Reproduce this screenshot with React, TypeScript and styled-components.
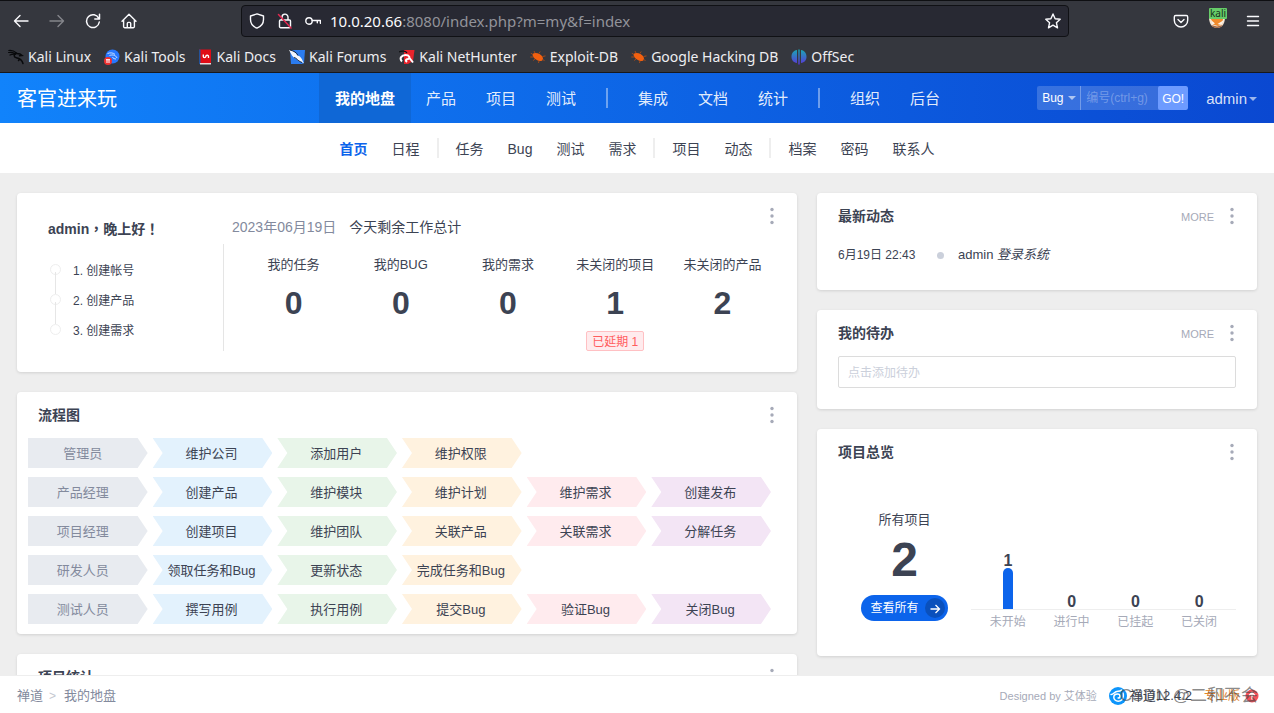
import React from "react";
import styled, { createGlobalStyle, css } from "styled-components";

const GlobalStyle = createGlobalStyle`
  *, *::before, *::after { box-sizing: border-box; }
  body {
    margin: 0;
    background: #eee;
    color: #3c4353;
    font-family: "Liberation Sans", "Noto Sans CJK SC", sans-serif;
    font-size: 13px;
    line-height: 20px;
  }
  a { color: inherit; text-decoration: none; }
  button, input, select { font: inherit; color: inherit; }
  h1, h2, p, ul, ol, dl, dd { margin: 0; padding: 0; }
  ul, ol { list-style: none; }
`;

const Shell = styled.div`
  display: flex;
  flex-direction: column;
  height: 100vh;
`;

/* ---------- Browser chrome ---------- */

const Chrome = styled.div`
  flex: none;
  background: #35373e;
  border-top: 1px solid #0e0f12;
  border-bottom: 1px solid #17181c;
  color: #fbfbfe;
  font-family: "Noto Sans", sans-serif;
`;

const Toolbar = styled.div`
  display: flex;
  align-items: center;
  height: 40px;
  padding: 0 3px;
`;

const ToolButton = styled.button<{ $dim?: boolean }>`
  display: flex;
  align-items: center;
  justify-content: center;
  flex: none;
  width: 36px;
  height: 32px;
  padding: 0;
  border: 0;
  background: none;
  opacity: ${(p) => (p.$dim ? 0.4 : 1)};
`;

const AddressBar = styled.div`
  display: flex;
  align-items: center;
  flex: 1;
  height: 32px;
  margin: 0 94px;
  padding: 0 7px;
  border: 1px solid #101115;
  border-radius: 4px;
  background: #282933;
`;

const AddressIcons = styled.div`
  display: flex;
  align-items: center;
  gap: 12px;
  margin-right: 9px;
`;

const Address = styled.div`
  flex: 1;
  color: #92939a;
  font-size: 15px;
  line-height: 24px;
  white-space: nowrap;
  outline: 0;
`;

const Host = styled.span`
  color: #fbfbfe;
`;

const Bookmarks = styled.nav`
  display: flex;
  align-items: center;
  gap: 13px;
  height: 31px;
  padding: 0 8px;
`;

const Bookmark = styled.a`
  display: flex;
  align-items: center;
  gap: 4px;
  color: #eeeef1;
  font-size: 14px;
  line-height: 20px;
  white-space: nowrap;
  svg { flex: none; }
`;

const stroke = {
  fill: "none",
  stroke: "currentColor",
  strokeWidth: 1.4,
  strokeLinecap: "round" as const,
  strokeLinejoin: "round" as const,
};

const BackIcon = () => (
  <svg width="16" height="16" viewBox="0 0 16 16" {...stroke}>
    <path d="M15 8H1.500M7 2.500 1.500 8 7 13.500" />
  </svg>
);
const ForwardIcon = () => (
  <svg width="16" height="16" viewBox="0 0 16 16" {...stroke}>
    <path d="M1 8h13.500M9 2.500 14.500 8 9 13.500" />
  </svg>
);
const ReloadIcon = () => (
  <svg width="16" height="16" viewBox="0 0 16 16" {...stroke} strokeWidth={1.5}>
    <path d="M13.800 5.500A6.400 6.400 0 1 0 14.300 9M14.500 1.200v4.700H9.800" />
  </svg>
);
const HomeIcon = () => (
  <svg width="16" height="16" viewBox="0 0 16 16" {...stroke}>
    <path d="M1 8.300 8 1.300l7 7M2.600 7v6.500a1.200 1.200 0 0 0 1.200 1.200h8.400a1.200 1.200 0 0 0 1.200-1.200V7M6.300 14.500V10.400a1 1 0 0 1 1-1h1.400a1 1 0 0 1 1 1v4.100" />
  </svg>
);
const ShieldIcon = () => (
  <svg width="16" height="16" viewBox="0 0 16 16" {...stroke}>
    <path d="M8 .9 14.500 3v3.500c0 4-2.300 7-6.500 8.600C3.800 13.500 1.500 10.500 1.500 6.500V3z" />
  </svg>
);
const InsecureIcon = () => (
  <svg width="16" height="16" viewBox="0 0 16 16" {...stroke}>
    <path d="M5 7V4.200a3 3 0 0 1 6-.2V7M3.500 7h9a1 1 0 0 1 1 1v5.500a1.200 1.200 0 0 1-1.200 1.200H3.700a1.200 1.200 0 0 1-1.200-1.200V8a1 1 0 0 1 1-1z" />
    <path d="M1.500 1.500 14 15" stroke="#e22850" strokeWidth="1.500" />
  </svg>
);
const KeyIcon = () => (
  <svg width="16" height="16" viewBox="0 0 16 16" {...stroke}>
    <circle cx="4" cy="8" r="3.200" />
    <path d="M7.200 7.500h8.200v2.800M12.300 7.500v2.200" />
  </svg>
);
const StarIcon = () => (
  <svg width="16" height="16" viewBox="0 0 16 16" {...stroke}>
    <path d="m8 1 2.100 4.700 5.100.5-3.800 3.500 1.100 5.100L8 12.200l-4.500 2.600 1.100-5.100L.8 6.200l5.100-.5z" />
  </svg>
);
const PocketIcon = () => (
  <svg width="16" height="16" viewBox="0 0 16 16" {...stroke}>
    <path d="M2.700 2.500h10.600a1.400 1.400 0 0 1 1.400 1.400v3.400a6.700 6.700 0 0 1-13.400 0V3.900a1.400 1.400 0 0 1 1.400-1.400zM5 6.500l3 3 3-3" />
  </svg>
);
const MenuIcon = () => (
  <svg width="16" height="16" viewBox="0 0 16 16" {...stroke}>
    <path d="M2.500 3.500h11M2.500 8h11M2.500 12.500h11" />
  </svg>
);

const ProxyWrap = styled.span`
  position: relative;
  display: flex;
`;
const ProxyBadge = styled.span`
  position: absolute;
  left: 1px;
  top: -4px;
  padding: 0 1px;
  border-radius: 1px;
  background: #67cd69;
  color: #16331a;
  font-size: 10px;
  line-height: 11px;
`;
const FoxIcon = () => (
  <svg width="18" height="18" viewBox="0 0 18 18">
    <path d="M1 6h16c-.3 6.500-3.500 10-8 10S1.300 12.500 1 6z" fill="#f2e3d3" />
    <path d="M3 7h12l-1 5.500-4 1.500-5-1.500z" fill="#f08a2c" />
    <path d="m3 8 4 3.500-2.500 1zM16 8l-2.500 5-4-1z" fill="#fbf3e8" />
    <path d="M3 13c3 4 9 4 12 0l-6 1.500z" fill="#a9683f" />
  </svg>
);

const DragonIcon = () => (
  <svg width="16" height="16" viewBox="0 0 16 16" fill="none" stroke="#08090b" strokeLinecap="round">
    <path d="M.8 1.500c3-.4 5.500.6 7.700 2.500M.6 3.500c2.200-.4 4.500 0 6 .9M2 6c1.500-.8 3.500-1 5.500-.8" strokeWidth="1.200" />
    <path d="M8 4.500c-2.500 1-2.500 3.800.3 4.300 3 .5 5.700 2 6.700 5.700M8.500 4.500l3.500.4 2 1.600-2.500.2M11.500 10.500l-1 1" strokeWidth="1.500" />
  </svg>
);
const ToolsIcon = () => (
  <svg width="16" height="16" viewBox="0 0 16 16">
    <circle cx="8.500" cy="7.500" r="7" fill="#2777ff" />
    <path d="M3.500 4.500c3-1.200 6-.6 7.500.9M5.500 6.500c3-1 6-.8 7.500 2.500M9 8c-1 1 1 1.800 3 2" fill="none" stroke="#dcecff" strokeWidth=".9" />
    <circle cx="4" cy="12" r="4" fill="#ef3030" />
    <path d="M2 10.700h4M3 10.700V14M5 10.700V14" stroke="#fff" />
  </svg>
);
const DocsIcon = () => (
  <svg width="14" height="16" viewBox="0 0 14 16">
    <path d="M0 .5h12V15H0z" fill="#e00b16" />
    <path d="M0 .5h1.500V15H0z" fill="#24529a" />
    <path d="M1 14h11v1.500H1z" fill="#e9d9d9" />
    <path d="M4.300 5.500v2c0 1.500 2.500 1.500 2.500 0s2.700-2 2.700 0v1.500" fill="none" stroke="#fff" strokeWidth="1.400" />
  </svg>
);
const ForumsIcon = () => (
  <svg width="16" height="16" viewBox="0 0 16 16">
    <path d="M1 1h15l-1 13-2 1H2z" fill="#2b7cf0" />
    <path d="M0 1c4 1 7 2.500 8.500 5.500 3 .5 4.500 3.500 6.500 8-3-2.500-6-2-7.500-5C3.500 9 2 4.500 0 1z" fill="#f2f6fc" />
    <path d="M1 1c4 1 6.500 2.500 8 5.500M5 8.500c3 .5 3 3 8 5" fill="none" stroke="#111" strokeWidth=".8" />
  </svg>
);
const HunterIcon = () => (
  <svg width="16" height="16" viewBox="0 0 16 16">
    <path d="M5 1h10.500L14 12l-5 3H5z" fill="#e9242c" />
    <path d="M3 12.500C0 9.500 2.500 6 6.500 6c4 0 5 3 2.500 4-2 .3-3 1.500-1 3M10.500 9l3.500 4.500" fill="none" stroke="#fff" strokeWidth="2" />
    <path d="M0 3c3-1.500 7-1 8 1" fill="none" stroke="#101114" strokeWidth="1.200" />
  </svg>
);
const BugIcon = () => (
  <svg width="16" height="16" viewBox="0 0 16 16">
    <path d="M2.500 5c2.500-2 8-.8 10 2.800 1.300 2.700.1 4.700-2.600 4.200C6.500 11.500 2.500 9 2.500 5z" fill="#f3600f" />
    <path d="M5 4 4 2M9 4.500l1.200-2M12.500 7.500l3-.6M3.500 8H.3M5 10l-1.800 1.500M9 12l-.5 2M12.500 10.500l2 1M2.500 5 .8 4.300" stroke="#a34a18" />
  </svg>
);
const OffSecIcon = () => (
  <svg width="16" height="16" viewBox="0 0 16 16">
    <defs>
      <linearGradient id="offsec" x1="0" y1="0" x2="0" y2="1">
        <stop offset="0" stopColor="#19a7b4" />
        <stop offset="1" stopColor="#5a35d8" />
      </linearGradient>
    </defs>
    <path d="M6 1v13C2.500 13.500 .5 11 .5 7.700S2.500 1.500 6 1zM10 1v13c3.500-.5 5.500-3 5.500-6.300S13.500 1.500 10 1zM7.300.5h1.400v15H7.300z" fill="url(#offsec)" />
  </svg>
);

const bookmarks = [
  { name: "Kali Linux", Icon: DragonIcon },
  { name: "Kali Tools", Icon: ToolsIcon },
  { name: "Kali Docs", Icon: DocsIcon },
  { name: "Kali Forums", Icon: ForumsIcon },
  { name: "Kali NetHunter", Icon: HunterIcon },
  { name: "Exploit-DB", Icon: BugIcon },
  { name: "Google Hacking DB", Icon: BugIcon },
  { name: "OffSec", Icon: OffSecIcon },
];

/* ---------- Header ---------- */

const Header = styled.header`
  display: grid;
  grid-template-columns: 1fr auto 1fr;
  flex: none;
  align-items: center;
  height: 50px;
  padding: 0 17px;
  background: linear-gradient(90deg, #1183fb, #0a48d1);
  color: #fff;
`;

const Brand = styled.h1`
  padding-top: 2px;
  font-size: 20px;
  font-weight: 400;
  line-height: 28px;
  white-space: nowrap;
`;

const MainNav = styled.nav`
  display: flex;
  align-items: center;
`;

const MainLink = styled.a<{ $active?: boolean }>`
  padding: 2px ${(p) => (p.$active ? 16 : 15)}px 0;
  color: rgba(255, 255, 255, 0.9);
  font-size: 15px;
  line-height: 48px;
  white-space: nowrap;
  ${(p) =>
    p.$active &&
    css`
      background: #0f67d6;
      color: #fff;
      font-weight: 700;
    `}
`;

const MainDivider = styled.span`
  width: 2px;
  height: 20px;
  margin: 0 15px;
  background: rgba(255, 255, 255, 0.4);
`;

const HeaderTools = styled.div`
  display: flex;
  align-items: center;
  justify-content: flex-end;
  gap: 18px;
`;

const SearchForm = styled.form`
  display: flex;
  height: 24px;
  border-radius: 2px;
  background: rgba(255, 255, 255, 0.18);
  font-size: 12px;
  overflow: hidden;
`;

const SelectBox = styled.label`
  display: flex;
  align-items: center;
  width: 44px;
  padding: 0 4px 0 5px;
  border-right: 1px solid rgba(255, 255, 255, 0.3);
`;

const TypeSelect = styled.select`
  appearance: none;
  flex: 1;
  min-width: 0;
  padding: 0;
  border: 0;
  background: none;
  outline: 0;
`;

const SearchInput = styled.input`
  width: 77px;
  padding: 0 5px;
  border: 0;
  background: none;
  outline: 0;
  &::placeholder { color: rgba(255, 255, 255, 0.3); opacity: 1; }
`;

const GoButton = styled.button`
  width: 30px;
  padding: 2px 0 0;
  border: 0;
  border-radius: 2px;
  background: #6d9bff;
`;

const UserButton = styled.button`
  display: flex;
  align-items: center;
  gap: 2px;
  padding: 2px 0 0;
  border: 0;
  background: none;
  color: rgba(255, 255, 255, 0.85);
  font-size: 15px;
`;

const Caret = () => (
  <svg width="8" height="4" viewBox="0 0 8 4" fill="#fff" opacity=".6">
    <path d="M0 0h8L4 4z" />
  </svg>
);

/* ---------- Sub navigation ---------- */

const SubNav = styled.nav`
  display: flex;
  flex: none;
  align-items: center;
  justify-content: center;
  height: 50px;
  background: #fff;
`;

const SubLink = styled.a<{ $active?: boolean }>`
  padding: 2px 12px 0;
  font-size: 14px;
  line-height: 20px;
  white-space: nowrap;
  ${(p) =>
    p.$active &&
    css`
      color: #0c64eb;
      font-weight: 700;
    `}
`;

const SubDivider = styled.span`
  width: 2px;
  height: 20px;
  margin: 0 5px;
  background: #eee;
`;

/* ---------- Dashboard ---------- */

const Main = styled.main`
  display: grid;
  grid-template-columns: 780fr 440fr;
  align-items: start;
  gap: 20px;
  flex: 1;
  min-height: 0;
  padding: 20px 17px 0;
  overflow: auto;
  scrollbar-width: none;
`;

const Column = styled.div`
  display: flex;
  flex-direction: column;
  gap: 20px;
  min-width: 0;
`;

const Card = styled.section`
  position: relative;
  border-radius: 4px;
  background: #fff;
  box-shadow: 0 1px 3px rgba(0, 0, 0, 0.12);
`;

const CardHead = styled.div`
  display: flex;
  align-items: center;
  height: 46px;
  padding: 0 21px;
`;

const CardTitle = styled.h2`
  flex: 1;
  font-size: 14px;
  font-weight: 700;
`;

const More = styled.a`
  margin-right: 14px;
  padding-top: 2px;
  color: #a6aab8;
  font-size: 11px;
`;

const DotsButton = styled.button<{ $floating?: boolean }>`
  display: flex;
  align-items: center;
  justify-content: center;
  width: 8px;
  height: 20px;
  padding: 0;
  border: 0;
  background: none;
  ${(p) =>
    p.$floating &&
    css`
      position: absolute;
      top: 13px;
      right: 21px;
    `}
`;

const Dots = ({ floating }: { floating?: boolean }) => (
  <DotsButton type="button" aria-label="更多操作" $floating={floating}>
    <svg width="4" height="18" viewBox="0 0 4 18" fill="#a6aab8">
      <circle cx="2" cy="2.500" r="1.700" />
      <circle cx="2" cy="9" r="1.700" />
      <circle cx="2" cy="15.500" r="1.700" />
    </svg>
  </DotsButton>
);

const Welcome = styled.div`
  display: flex;
  padding: 24px 21px 21px 31px;
`;

const WelcomeLeft = styled.div`
  width: 175px;
  padding-top: 2px;
`;

const Greeting = styled.h2`
  font-family: "Liberation Sans", "Noto Sans CJK TC", sans-serif;
  font-size: 14px;
  font-weight: 700;
`;

const Steps = styled.ol`
  display: flex;
  flex-direction: column;
  gap: 10px;
  margin-top: 22px;
`;

const Step = styled.li`
  position: relative;
  padding-left: 25px;
  font-size: 12px;
  line-height: 20px;
  &::before {
    content: "";
    position: absolute;
    left: 2px;
    top: 3px;
    width: 11px;
    height: 11px;
    border: 1px solid #eee;
    border-radius: 50%;
  }
  &:not(:last-child)::after {
    content: "";
    position: absolute;
    left: 7px;
    top: 11px;
    width: 1px;
    height: 22px;
    background: #e6e6e6;
  }
`;

const WelcomeRight = styled.div`
  flex: 1;
`;

const Summary = styled.p`
  display: flex;
  gap: 13px;
  padding-left: 9px;
  font-size: 14px;
  line-height: 20px;
`;

const DateText = styled.span`
  color: #838a9d;
`;

const Stats = styled.dl`
  display: grid;
  grid-template-columns: repeat(5, 1fr);
  min-height: 107px;
  margin-top: 7px;
  padding: 11px 0 0 16px;
  border-left: 1px solid #e5e5e5;
`;

const Stat = styled.div`
  display: flex;
  flex-direction: column;
  align-items: center;
`;

const StatValue = styled.dd<{ $large?: boolean }>`
  margin-top: ${(p) => (p.$large ? 6 : 8)}px;
  font-size: ${(p) => (p.$large ? 48 : 32)}px;
  font-weight: 700;
  line-height: ${(p) => (p.$large ? 48 : 40)}px;
`;

const Delayed = styled.span`
  margin-top: 8px;
  padding: 2px 5px 0;
  border: 1px solid #ffc0c3;
  border-radius: 2px;
  background: #ffebed;
  color: #ff5d5d;
  font-size: 12px;
  line-height: 16px;
`;

const Flow = styled.div`
  display: flex;
  flex-direction: column;
  gap: 9px;
  padding: 0 26px 10px 11px;
`;

const FlowRow = styled.div`
  display: grid;
  grid-template-columns: repeat(6, 1fr);
  gap: 5px;
`;

const FlowRole = styled.div`
  padding: 2px 10px 0 0;
  background: #e8ebf0;
  color: #838a9d;
  line-height: 28px;
  text-align: center;
  clip-path: polygon(0 0, calc(100% - 10px) 0, 100% 50%, calc(100% - 10px) 100%, 0 100%);
`;

const FlowStep = styled.a<{ $color: string }>`
  padding: 2px 2px 0 0;
  background: ${(p) => p.$color};
  line-height: 28px;
  text-align: center;
  white-space: nowrap;
  clip-path: polygon(0 0, calc(100% - 10px) 0, 100% 50%, calc(100% - 10px) 100%, 0 100%, 10px 50%);
`;

const flowColors = ["#e3f2fd", "#e8f5e9", "#fff2df", "#ffebee", "#f3e5f5"];
const flows = [
  ["管理员", "维护公司", "添加用户", "维护权限"],
  ["产品经理", "创建产品", "维护模块", "维护计划", "维护需求", "创建发布"],
  ["项目经理", "创建项目", "维护团队", "关联产品", "关联需求", "分解任务"],
  ["研发人员", "领取任务和Bug", "更新状态", "完成任务和Bug"],
  ["测试人员", "撰写用例", "执行用例", "提交Bug", "验证Bug", "关闭Bug"],
];

const StatsBody = styled.div`
  height: 200px;
`;

const Timeline = styled.ul`
  padding: 6px 21px 25px;
`;

const TimelineItem = styled.li`
  display: flex;
  align-items: center;
`;

const Time = styled.time`
  width: 99px;
  font-size: 12px;
  white-space: nowrap;
`;

const TimeDot = styled.span`
  width: 7px;
  height: 7px;
  margin-right: 14px;
  border-radius: 50%;
  background: #cbd0db;
`;

const TodoForm = styled.form`
  padding: 0 21px 21px;
`;

const TodoInput = styled.input`
  display: block;
  width: 100%;
  height: 32px;
  padding: 2px 9px 0;
  border: 1px solid #dcdcdc;
  border-radius: 2px;
  background: #fff;
  font-size: 12px;
  outline: 0;
  &::placeholder { color: #cbd0db; opacity: 1; }
`;

const Overview = styled.div`
  display: flex;
  align-items: flex-end;
  justify-content: space-between;
  padding: 35px 21px 25px;
`;

const Total = styled.dl`
  display: flex;
  flex-direction: column;
  align-items: center;
  width: 133px;
  padding-bottom: 10px;
`;

const AllButton = styled.button`
  display: flex;
  align-items: center;
  gap: 6px;
  height: 26px;
  margin-top: 11px;
  padding: 0 3px 0 9px;
  border: 0;
  border-radius: 13px;
  background: #0c64eb;
  color: #fff;
  font-size: 12px;
  line-height: 20px;
`;

const AllArrow = () => (
  <svg width="20" height="20" viewBox="0 0 20 20">
    <circle cx="10" cy="10" r="10" fill="#0a50bc" />
    <path d="M5.500 11h9M10.500 7l4 4-4 4" fill="none" stroke="#fff" strokeWidth="1.300" />
  </svg>
);

const Chart = styled.ul`
  display: grid;
  grid-template-columns: repeat(4, 1fr);
  align-items: end;
  flex: 1;
  padding: 0 5px;
  background: linear-gradient(#eee, #eee) 0 calc(100% - 21px) / 100% 1px no-repeat;
`;

const ChartItem = styled.li`
  display: flex;
  flex-direction: column;
  align-items: center;
`;

const ChartValue = styled.span`
  font-size: 16px;
  font-weight: 700;
  line-height: 14px;
`;

const Bar = styled.span`
  width: 10px;
  border-radius: 5px 5px 0 0;
  background: #0c64eb;
`;

const ChartLabel = styled.span`
  margin-top: 4px;
  color: #a6aab8;
  font-size: 12px;
  line-height: 18px;
`;

const chart = [
  { label: "未开始", value: 1 },
  { label: "进行中", value: 0 },
  { label: "已挂起", value: 0 },
  { label: "已关闭", value: 0 },
];

/* ---------- Footer ---------- */

const Footer = styled.footer`
  position: relative;
  display: flex;
  flex: none;
  align-items: center;
  justify-content: space-between;
  height: 38px;
  padding: 2px 15px 0 17px;
  border-top: 1px solid #eee;
  background: #fff;
  color: #838a9d;
`;

const Crumbs = styled.nav`
  display: flex;
  gap: 6px;
`;

const CrumbArrow = styled.span`
  margin-right: 2px;
  color: #c4c7d0;
  font-size: 12px;
`;

const Credits = styled.div`
  display: flex;
  align-items: center;
  color: #a6aab8;
  font-size: 11px;
`;

const Version = styled.a`
  display: flex;
  align-items: center;
  gap: 2px;
  margin-left: 11px;
  color: #3c4353;
  font-size: 13px;
`;

const Edition = styled.span`
  margin: 0 5px 0 12px;
  color: #e0852f;
  font-size: 12px;
`;

const Watermark = styled.span`
  position: absolute;
  right: 16px;
  top: 7px;
  color: rgba(70, 70, 70, 0.65);
  font-size: 17px;
  line-height: 26px;
  white-space: nowrap;
`;

const ZentaoLogo = () => (
  <svg width="20" height="20" viewBox="0 0 20 20">
    <circle cx="10" cy="10" r="9" fill="#0d95fb" />
    <path d="M3 8.500c2.500.5 3-3.200 7-3.200 1.500 0 2.500-.3 3.500-1.300M15 7c.5 1 .5 2 .3 3.500-.5 3-2.500 4.700-5.100 4.700s-4.400-1.800-4.400-3.900S7.500 8 9.500 8s2.500 1.200 2.500 2.200-.8 1.800-1.900 1.800" fill="none" stroke="#fff" strokeWidth="1.500" strokeLinecap="round" />
  </svg>
);

const EditionBadge = () => (
  <svg width="14" height="14" viewBox="0 0 14 14">
    <circle cx="7" cy="7" r="6.500" fill="#f5515a" />
    <path d="M7 10.500V4M4 6.500l3-3 3 3" fill="none" stroke="#fff" strokeWidth="1.400" />
  </svg>
);

const mainNav = [["产品", "项目", "测试"], ["集成", "文档", "统计"], ["组织", "后台"]];
const subNav = [["首页", "日程"], ["任务", "Bug", "测试", "需求"], ["项目", "动态"], ["档案", "密码", "联系人"]];
const stats = [
  { label: "我的任务", value: 0 },
  { label: "我的BUG", value: 0 },
  { label: "我的需求", value: 0 },
  { label: "未关闭的项目", value: 1, delayed: 1 },
  { label: "未关闭的产品", value: 2 },
];

export default function App() {
  return (
    <Shell>
      <GlobalStyle />
      <Chrome>
        <Toolbar>
          <ToolButton aria-label="Back"><BackIcon /></ToolButton>
          <ToolButton aria-label="Forward" $dim><ForwardIcon /></ToolButton>
          <ToolButton aria-label="Reload"><ReloadIcon /></ToolButton>
          <ToolButton aria-label="Home"><HomeIcon /></ToolButton>
          <AddressBar>
            <AddressIcons>
              <ShieldIcon />
              <InsecureIcon />
              <KeyIcon />
            </AddressIcons>
            <Address role="textbox" aria-label="Address" contentEditable suppressContentEditableWarning spellCheck={false}>
              <Host>10.0.20.66</Host>:8080/index.php?m=my&amp;f=index
            </Address>
            <StarIcon />
          </AddressBar>
          <ToolButton aria-label="Pocket"><PocketIcon /></ToolButton>
          <ToolButton aria-label="Proxy">
            <ProxyWrap>
              <FoxIcon />
              <ProxyBadge>kali</ProxyBadge>
            </ProxyWrap>
          </ToolButton>
          <ToolButton aria-label="Menu"><MenuIcon /></ToolButton>
        </Toolbar>
        <Bookmarks>
          {bookmarks.map(({ name, Icon }) => (
            <Bookmark href="#" key={name}>
              <Icon />
              {name}
            </Bookmark>
          ))}
        </Bookmarks>
      </Chrome>

      <Header>
        <Brand>客官进来玩</Brand>
        <MainNav>
          <MainLink href="#" $active>我的地盘</MainLink>
          {mainNav.map((group, i) => (
            <React.Fragment key={i}>
              {i > 0 && <MainDivider />}
              {group.map((name) => (
                <MainLink href="#" key={name}>{name}</MainLink>
              ))}
            </React.Fragment>
          ))}
        </MainNav>
        <HeaderTools>
          <SearchForm>
            <SelectBox>
              <TypeSelect aria-label="搜索类型">
                <option>Bug</option>
              </TypeSelect>
              <Caret />
            </SelectBox>
            <SearchInput aria-label="编号" placeholder="编号(ctrl+g)" />
            <GoButton type="button">GO!</GoButton>
          </SearchForm>
          <UserButton>
            admin
            <Caret />
          </UserButton>
        </HeaderTools>
      </Header>

      <SubNav>
        {subNav.map((group, i) => (
          <React.Fragment key={i}>
            {i > 0 && <SubDivider />}
            {group.map((name) => (
              <SubLink href="#" key={name} $active={name === "首页"}>{name}</SubLink>
            ))}
          </React.Fragment>
        ))}
      </SubNav>

      <Main>
        <Column>
          <Card>
            <Dots floating />
            <Welcome>
              <WelcomeLeft>
                <Greeting>admin，晚上好！</Greeting>
                <Steps>
                  <Step><a href="#">1. 创建帐号</a></Step>
                  <Step><a href="#">2. 创建产品</a></Step>
                  <Step><a href="#">3. 创建需求</a></Step>
                </Steps>
              </WelcomeLeft>
              <WelcomeRight>
                <Summary>
                  <DateText>2023年06月19日</DateText>
                  <span>今天剩余工作总计</span>
                </Summary>
                <Stats>
                  {stats.map((s) => (
                    <Stat key={s.label}>
                      <dt>{s.label}</dt>
                      <StatValue>{s.value}</StatValue>
                      {s.delayed && <Delayed>已延期 {s.delayed}</Delayed>}
                    </Stat>
                  ))}
                </Stats>
              </WelcomeRight>
            </Welcome>
          </Card>

          <Card>
            <CardHead>
              <CardTitle>流程图</CardTitle>
              <Dots />
            </CardHead>
            <Flow>
              {flows.map(([role, ...steps]) => (
                <FlowRow key={role}>
                  <FlowRole>{role}</FlowRole>
                  {steps.map((step, i) => (
                    <FlowStep href="#" key={step} $color={flowColors[i]}>{step}</FlowStep>
                  ))}
                </FlowRow>
              ))}
            </Flow>
          </Card>

          <Card>
            <CardHead>
              <CardTitle>项目统计</CardTitle>
              <Dots />
            </CardHead>
            <StatsBody />
          </Card>
        </Column>

        <Column>
          <Card>
            <CardHead>
              <CardTitle>最新动态</CardTitle>
              <More href="#">MORE</More>
              <Dots />
            </CardHead>
            <Timeline>
              <TimelineItem>
                <Time>6月19日 22:43</Time>
                <TimeDot />
                <span>admin <em>登录系统</em></span>
              </TimelineItem>
            </Timeline>
          </Card>

          <Card>
            <CardHead>
              <CardTitle>我的待办</CardTitle>
              <More href="#">MORE</More>
              <Dots />
            </CardHead>
            <TodoForm>
              <TodoInput aria-label="添加待办" placeholder="点击添加待办" />
            </TodoForm>
          </Card>

          <Card>
            <CardHead>
              <CardTitle>项目总览</CardTitle>
              <Dots />
            </CardHead>
            <Overview>
              <Total>
                <dt>所有项目</dt>
                <StatValue $large>2</StatValue>
                <dd>
                  <AllButton type="button">
                    查看所有
                    <AllArrow />
                  </AllButton>
                </dd>
              </Total>
              <Chart>
                {chart.map((c) => (
                  <ChartItem key={c.label}>
                    <ChartValue>{c.value}</ChartValue>
                    <Bar style={{ height: c.value * 41 }} />
                    <ChartLabel>{c.label}</ChartLabel>
                  </ChartItem>
                ))}
              </Chart>
            </Overview>
          </Card>
        </Column>
      </Main>

      <Footer>
        <Crumbs>
          <a href="#">禅道</a>
          <CrumbArrow>&gt;</CrumbArrow>
          <a href="#">我的地盘</a>
        </Crumbs>
        <Credits>
          Designed by 艾体验
          <Version href="#">
            <ZentaoLogo />
            禅道12.4.2
          </Version>
          <Edition>专业版</Edition>
          <EditionBadge />
        </Credits>
        <Watermark>CSDN @二和不会</Watermark>
      </Footer>
    </Shell>
  );
}
